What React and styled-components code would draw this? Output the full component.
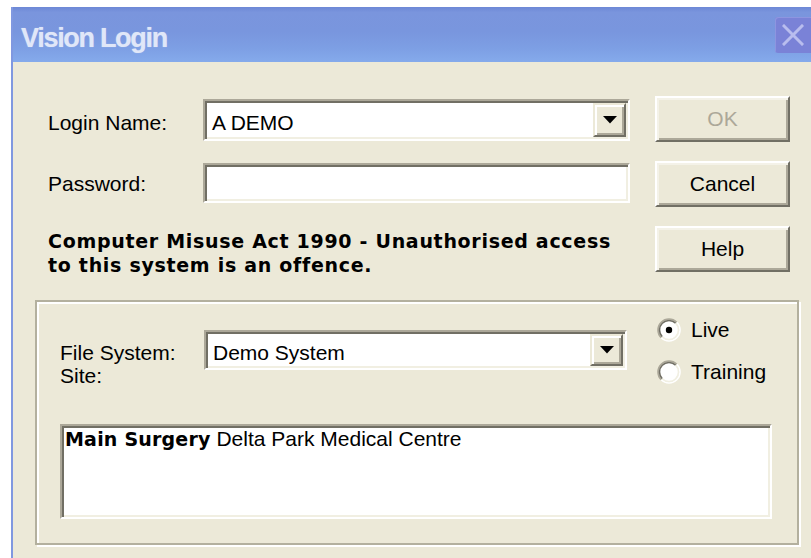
import React from "react";
import styled, { createGlobalStyle } from "styled-components";

const GlobalStyle = createGlobalStyle`
  html, body {
    margin: 0;
    padding: 0;
    background: #ffffff;
  }
  body {
    font-family: "Liberation Sans", Arial, sans-serif;
    color: #000;
  }
  * { box-sizing: border-box; }
`;

const Window = styled.div`
  margin: 7px 0 0 11px;
  width: 800px;
  height: 551px;
  display: flex;
  flex-direction: column;
  border-left: 2px solid #8098e0;
  overflow: hidden;
`;

const TitleBar = styled.div`
  flex: none;
  height: 55px;
  display: flex;
  align-items: flex-start;
  justify-content: space-between;
  padding-left: 8px;
  background: linear-gradient(
    180deg,
    #6d88d6 0%,
    #7a95dd 10%,
    #7996de 45%,
    #7d9fe4 75%,
    #85aaeb 100%
  );
`;

const Title = styled.div`
  margin-top: 16px;
  font-family: "Liberation Sans", Arial, sans-serif;
  font-weight: bold;
  font-size: 27px;
  line-height: 30px;
  letter-spacing: -1.3px;
  color: #e0e7f8;
  text-shadow: 0 0 1px rgba(224, 231, 248, 0.6);
`;

const CloseButton = styled.div`
  margin-top: 10px;
  width: 36px;
  height: 36px;
  display: flex;
  align-items: center;
  justify-content: center;
  background: #7a82d7;
  border-radius: 3px 0 0 3px;
  box-shadow: inset 1px 1px 0 #8d95e0;
`;

const Body = styled.div`
  flex: 1;
  background: #ece9d8;
  padding: 34px 12px 0 22px;
  display: flex;
  flex-direction: column;
`;

const TopSection = styled.div`
  display: grid;
  grid-template-columns: 582px 135px;
  column-gap: 25px;
  align-items: start;
  padding-left: 13px;
`;

const FormColumn = styled.div`
  margin-top: 3px;
  display: flex;
  flex-direction: column;
`;

const FieldRow = styled.div`
  display: flex;
  align-items: flex-start;
  margin-top: ${(p) => p.$gap || 0}px;
`;

const Label = styled.div`
  flex: none;
  width: ${(p) => (p.$width ? `${p.$width}px` : "auto")};
  padding-top: ${(p) => p.$offset || 0}px;
  font-size: 21px;
  line-height: 20px;
  margin-top: ${(p) => p.$shift || 0}px;
`;

const Sunken = styled.div`
  background: #ffffff;
  border: 2px solid;
  border-color: #aca899 #ffffff #ffffff #aca899;
  box-shadow: inset 2px 2px 0 #716f64, inset -2px -2px 0 #f1efe2;
  padding: 2px;
`;

const ComboBox = styled(Sunken)`
  flex: none;
  width: ${(p) => p.$width}px;
  height: ${(p) => p.$height}px;
  display: flex;
  align-items: stretch;
`;

const FieldText = styled.div`
  flex: 1;
  padding: ${(p) => p.$top}px 0 0 5px;
  font-size: 21px;
  line-height: 20px;
  white-space: nowrap;
`;

const DropButton = styled.div`
  flex: none;
  width: 33px;
  display: flex;
  align-items: center;
  justify-content: center;
  background: #ece9d8;
  border: 2px solid;
  border-color: #ece9d8 #716f64 #716f64 #ece9d8;
  box-shadow: inset 2px 2px 0 #ffffff, inset -2px -2px 0 #aca899;
`;

const Notice = styled.div`
  margin-top: 26px;
  font-family: "DejaVu Sans", Verdana, sans-serif;
  font-weight: bold;
  font-size: 19px;
  line-height: 24px;
  letter-spacing: 0.7px;
`;

const ButtonColumn = styled.div`
  display: flex;
  flex-direction: column;
  gap: 19px;
`;

const PushButton = styled.div`
  height: 46px;
  display: flex;
  align-items: center;
  justify-content: center;
  font-size: 21px;
  color: ${(p) => (p.$disabled ? "#aca899" : "#000")};
  background: #ece9d8;
  border: 2px solid;
  border-color: #ffffff #716f64 #716f64 #ffffff;
  box-shadow: inset 2px 2px 0 #f4f2e8, inset -2px -2px 0 #aca899;
`;

const GroupBox = styled.div`
  margin-top: 23px;
  border: 2px solid #b3b09e;
  box-shadow: inset 2px 2px 0 #ffffff, 2px 2px 0 #ffffff;
  padding: 16px 25px 24px 23px;
`;

const GroupTop = styled.div`
  display: flex;
  align-items: flex-start;
`;

const GroupFields = styled.div`
  display: flex;
  flex-direction: column;
`;

const RadioColumn = styled.div`
  margin-left: 30px;
  display: flex;
  flex-direction: column;
  gap: 18px;
`;

const RadioRow = styled.div`
  height: 24px;
  display: flex;
  align-items: center;
  gap: 10px;
  font-size: 21px;
  line-height: 24px;
`;

const SiteList = styled(Sunken)`
  margin-top: 38px;
  height: 95px;
`;

const SiteLine = styled.div`
  padding-left: 1px;
  font-size: 21px;
  line-height: 22px;
  white-space: nowrap;
`;

const SiteName = styled.span`
  font-family: "DejaVu Sans", Verdana, sans-serif;
  font-weight: bold;
  font-size: 19px;
  letter-spacing: 0.2px;
`;

const DownArrow = () => (
  <svg width="14" height="8" viewBox="0 0 14 8">
    <polygon points="0,0 14,0 7,7.5" fill="#000" />
  </svg>
);

const CloseGlyph = () => (
  <svg width="22" height="22" viewBox="0 0 22 22">
    <path
      d="M2 2 L20 20 M20 2 L2 20"
      stroke="#b9bdee"
      strokeWidth="3"
      strokeLinecap="square"
    />
  </svg>
);

const RadioMark = ({ checked }) => (
  <svg width="24" height="24" viewBox="0 0 24 24">
    <circle cx="12" cy="12" r="10" fill="#ffffff" />
    <path d="M4.22 19.78 A11 11 0 0 1 19.78 4.22" fill="none" stroke="#aca899" strokeWidth="1.6" />
    <path d="M19.78 4.22 A11 11 0 0 1 4.22 19.78" fill="none" stroke="#ffffff" strokeWidth="1.6" />
    <path d="M5.28 18.72 A9.5 9.5 0 0 1 18.72 5.28" fill="none" stroke="#716f64" strokeWidth="1.6" />
    <path d="M18.72 5.28 A9.5 9.5 0 0 1 5.28 18.72" fill="none" stroke="#f1efe2" strokeWidth="1.6" />
    {checked && <circle cx="12" cy="12" r="3.2" fill="#000" />}
  </svg>
);

export default function App() {
  return (
    <>
      <GlobalStyle />
      <Window>
        <TitleBar>
          <Title>Vision Login</Title>
          <CloseButton>
            <CloseGlyph />
          </CloseButton>
        </TitleBar>
        <Body>
          <TopSection>
            <FormColumn>
              <FieldRow>
                <Label $width={155} $offset={14}>Login Name:</Label>
                <ComboBox $width={427} $height={42}>
                  <FieldText $top={10}>A DEMO</FieldText>
                  <DropButton>
                    <DownArrow />
                  </DropButton>
                </ComboBox>
              </FieldRow>
              <FieldRow $gap={22}>
                <Label $width={155} $offset={11}>Password:</Label>
                <ComboBox $width={427} $height={40} />
              </FieldRow>
              <Notice>
                Computer Misuse Act 1990 - Unauthorised access
                <br />
                to this system is an offence.
              </Notice>
            </FormColumn>
            <ButtonColumn>
              <PushButton $disabled>OK</PushButton>
              <PushButton>Cancel</PushButton>
              <PushButton>Help</PushButton>
            </ButtonColumn>
          </TopSection>

          <GroupBox>
            <GroupTop>
              <GroupFields>
                <FieldRow $gap={12}>
                  <Label $width={144} $offset={13}>File System:</Label>
                  <ComboBox $width={423} $height={40}>
                    <FieldText $top={9}>Demo System</FieldText>
                    <DropButton>
                      <DownArrow />
                    </DropButton>
                  </ComboBox>
                </FieldRow>
                <Label $shift={-4}>Site:</Label>
              </GroupFields>
              <RadioColumn>
                <RadioRow>
                  <RadioMark checked />
                  Live
                </RadioRow>
                <RadioRow>
                  <RadioMark />
                  Training
                </RadioRow>
              </RadioColumn>
            </GroupTop>
            <SiteList>
              <SiteLine>
                <SiteName>Main Surgery</SiteName> Delta Park Medical Centre
              </SiteLine>
            </SiteList>
          </GroupBox>
        </Body>
      </Window>
    </>
  );
}
